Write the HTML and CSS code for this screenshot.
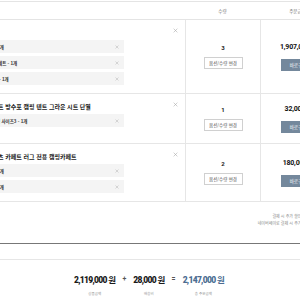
FILE: index.html
```html
<!DOCTYPE html>
<html lang="ko">
<head>
    <meta charset="UTF-8">
    <meta name="viewport" content="width=device-width, initial-scale=1.0">
    <title>장바구니</title>
    <link rel="stylesheet" href="styles.css">
</head>
<body>
    <!-- cart table -->
    <div class="cart">
        <div class="cart_head">
            <div></div>
            <div>수량</div>
            <div>주문금액</div>
        </div>

        <div class="cart_row row_first">
            <div class="col_product">
                <div class="info">
                    <p class="title"></p>
                    <ul class="options">
                        <li><span class="opt_txt cut3">1개</span><svg class="del" viewBox="0 0 8 8"><path d="M1 1L7 7M7 1L1 7"/></svg></li>
                        <li><span class="opt_txt cut2">세트 - 1개</span><svg class="del" viewBox="0 0 8 8"><path d="M1 1L7 7M7 1L1 7"/></svg></li>
                        <li><span class="opt_txt cut1">- 1개</span><svg class="del" viewBox="0 0 8 8"><path d="M1 1L7 7M7 1L1 7"/></svg></li>
                    </ul>
                </div>
                <svg class="remove" viewBox="0 0 8 8"><path d="M1 1L7 7M7 1L1 7"/></svg>
            </div>
            <div class="col_qty">
                <p class="qty">3</p>
                <button class="btn_line">옵션/수량 변경</button>
            </div>
            <div class="col_price">
                <p class="price">1,907,000원</p>
                <button class="btn_buy">바로구매</button>
            </div>
        </div>

        <div class="cart_row">
            <div class="col_product">
                <div class="info">
                    <p class="title"><span class="cut2">트 방수포 캠핑 텐트 그라운 시트 단열</span></p>
                    <ul class="options">
                        <li><span class="opt_txt cut4">형 사이즈3 - 1개</span><svg class="del" viewBox="0 0 8 8"><path d="M1 1L7 7M7 1L1 7"/></svg></li>
                    </ul>
                </div>
                <svg class="remove" viewBox="0 0 8 8"><path d="M1 1L7 7M7 1L1 7"/></svg>
            </div>
            <div class="col_qty">
                <p class="qty">1</p>
                <button class="btn_line">옵션/수량 변경</button>
            </div>
            <div class="col_price">
                <p class="price">32,000원</p>
                <button class="btn_buy">바로구매</button>
            </div>
        </div>

        <div class="cart_row">
            <div class="col_product">
                <div class="info">
                    <p class="title"><span class="cut2">츠 카페트 러그 전용 캠핑카페트</span></p>
                    <ul class="options">
                        <li><span class="opt_txt cut3">1개</span><svg class="del" viewBox="0 0 8 8"><path d="M1 1L7 7M7 1L1 7"/></svg></li>
                        <li><span class="opt_txt cut3">1개</span><svg class="del" viewBox="0 0 8 8"><path d="M1 1L7 7M7 1L1 7"/></svg></li>
                    </ul>
                </div>
                <svg class="remove" viewBox="0 0 8 8"><path d="M1 1L7 7M7 1L1 7"/></svg>
            </div>
            <div class="col_qty">
                <p class="qty">2</p>
                <button class="btn_line">옵션/수량 변경</button>
            </div>
            <div class="col_price">
                <p class="price">180,000원</p>
                <button class="btn_buy">바로구매</button>
            </div>
        </div>
    </div>

    <!-- notice -->
    <div class="notice">
        <p>결제 시 추가 할인 적용</p>
        <p>네이버페이로 결제 시 추가 적립</p>
    </div>

    <!-- total -->
    <div class="summary">
        <div class="summary_inner">
            <div class="amount">
                <p class="num">2,119,000<span class="won">원</span></p>
                <p class="label">상품금액</p>
            </div>
            <span class="sym">+</span>
            <div class="amount">
                <p class="num">28,000<span class="won">원</span></p>
                <p class="label">배송비</p>
            </div>
            <span class="sym">=</span>
            <div class="amount total">
                <p class="num">2,147,000<span class="won">원</span></p>
                <p class="label">총 주문금액</p>
            </div>
        </div>
    </div>
</body>
</html>
```

FILE: styles.css
```css
*{
    margin: 0;
    padding: 0;
    box-sizing: border-box;
}
html,body{
    width: 300px;
    height: 300px;
    overflow: hidden;
    background-color: #fff;
}
body{
    font-family: "Noto Sans CJK KR", sans-serif;
    color: #333;
}
ul{
    list-style: none;
}
button{
    font-family: inherit;
    cursor: pointer;
}
/* table */
.cart{
    width: 335px;
    margin-top: 1px;
}
.cart_head,.cart_row{
    display: grid;
    grid-template-columns: 185px 75px 75px;
}
.cart_head{
    height: 19px;
    border-top: 1px solid #e4e4e4;
    border-bottom: 1px solid #e4e4e4;
    align-items: center;
    text-align: center;
    font-size: 4.5px;
    color: #777;
}
.cart_row{
    min-height: 50px;
    border-bottom: 1px solid #e6e6e6;
}
.col_product{
    display: flex;
    justify-content: space-between;
    align-items: flex-start;
    padding: 8px 7px 8px 0;
    overflow: hidden;
}
.info{
    width: 124px;
}
.title{
    height: 10px;
    line-height: 10px;
    font-size: 6px;
    font-weight: 700;
    color: #222;
    white-space: nowrap;
}
.options{
    margin-top: 2px;
}
.options li{
    display: flex;
    justify-content: space-between;
    align-items: center;
    height: 13px;
    padding-right: 5px;
    background-color: #f4f4f4;
    overflow: hidden;
}
.options li + li{
    margin-top: 3px;
}
.opt_txt{
    font-size: 4.5px;
    font-weight: 700;
    color: #333;
    white-space: nowrap;
}
.cut1{ margin-left: -1px; }
.cut2{ margin-left: -2px; }
.cut3{ margin-left: -3px; }
.cut4{ margin-left: -4px; }
.del{
    width: 4px;
    height: 4px;
    stroke: #b5b5b5;
    stroke-width: 1;
    fill: none;
}
.remove{
    width: 5px;
    height: 5px;
    stroke: #a8a8a8;
    stroke-width: 0.9;
    fill: none;
}
.col_qty,.col_price{
    display: flex;
    flex-direction: column;
    justify-content: center;
    align-items: center;
    border-left: 1px solid #e6e6e6;
}
.col_qty{
    gap: 5px;
}
.col_price{
    gap: 8px;
}
.qty{
    font-family: Roboto, "Noto Sans CJK KR", sans-serif;
    font-size: 6px;
    line-height: 8px;
    font-weight: 700;
    color: #222;
}
.btn_line{
    width: 39px;
    height: 12px;
    border: 1px solid #d0d0d0;
    background-color: #fff;
    font-size: 4.5px;
    color: #555;
}
.price{
    font-family: Roboto, "Noto Sans CJK KR", sans-serif;
    font-size: 7px;
    line-height: 8px;
    font-weight: 700;
    color: #111;
    letter-spacing: -0.2px;
}
.btn_buy{
    width: 35px;
    height: 12px;
    border: none;
    background-color: #74889c;
    font-size: 4.5px;
    color: #fff;
}
/* notice */
.notice{
    width: 310px;
    height: 41px;
    padding-top: 11px;
    text-align: right;
    font-size: 4px;
    line-height: 7px;
    color: #888;
    white-space: nowrap;
}
/* summary */
.summary{
    border-top: 1px solid #777;
}
.summary_inner{
    display: flex;
    align-items: flex-start;
    gap: 7px;
    margin-top: 15px;
    padding: 14px 0 0 74px;
    border-top: 1px solid #e6e6e6;
}
.amount{
    display: flex;
    flex-direction: column;
    align-items: center;
}
.num{
    font-family: Roboto, "Noto Sans CJK KR", sans-serif;
    font-size: 8.5px;
    line-height: 10px;
    font-weight: 900;
    color: #1a1a1a;
    letter-spacing: -0.7px;
    white-space: nowrap;
}
.won{
    font-family: "Noto Sans CJK KR", sans-serif;
    font-weight: 700;
    margin-left: 1.5px;
}
.total .num{
    color: #4c6d92;
}
.sym{
    font-family: Roboto, sans-serif;
    font-size: 7px;
    line-height: 10px;
    font-weight: 700;
    color: #555;
}
.label{
    margin-top: 6px;
    font-size: 3.5px;
    line-height: 5px;
    color: #999;
}
```
